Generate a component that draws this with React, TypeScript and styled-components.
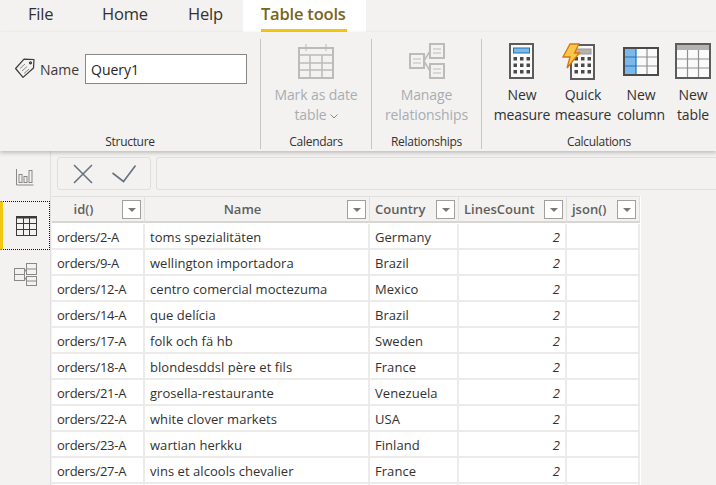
import styled, { createGlobalStyle } from 'styled-components';

const rows = [
  ['orders/2-A', 'toms spezialitäten', 'Germany'],
  ['orders/9-A', 'wellington importadora', 'Brazil'],
  ['orders/12-A', 'centro comercial moctezuma', 'Mexico'],
  ['orders/14-A', 'que delícia', 'Brazil'],
  ['orders/17-A', 'folk och fä hb', 'Sweden'],
  ['orders/18-A', 'blondesddsl père et fils', 'France'],
  ['orders/21-A', 'grosella-restaurante', 'Venezuela'],
  ['orders/22-A', 'white clover markets', 'USA'],
  ['orders/23-A', 'wartian herkku', 'Finland'],
  ['orders/27-A', 'vins et alcools chevalier', 'France'],
];

const columns = ['id()', 'Name', 'Country', 'LinesCount', 'json()'];

const GlobalStyle = createGlobalStyle`
  html, body {
    margin: 0;
    padding: 0;
    height: 485px;
    overflow: hidden;
    background: #f3f2f1;
    font-family: 'Open Sans', 'Noto Sans', sans-serif;
  }
`;

const Page = styled.div`
  width: 716px;
  height: 485px;
  overflow: hidden;
  display: flex;
  flex-direction: column;
  background: #f3f2f1;
  color: #252423;
`;

const TabBar = styled.div`
  height: 32px;
  flex: none;
  display: flex;
  padding-left: 28px;
  font-size: 16.5px;
  letter-spacing: -0.2px;
`;

const Tab = styled.div<{ $width: number }>`
  width: ${(p) => p.$width}px;
  line-height: 27px;
  color: #323130;
`;

const ActiveTab = styled.div`
  width: 123px;
  height: 32px;
  box-sizing: border-box;
  background: #fff;
  padding: 0 19px 0 18px;
`;

const ActiveLabel = styled.div`
  height: 32px;
  box-sizing: border-box;
  border-bottom: 3px solid #f2c811;
  line-height: 27px;
  font-weight: 600;
  color: #7a6420;
  white-space: nowrap;
`;

const Ribbon = styled.div`
  height: 119px;
  flex: none;
  display: flex;
  padding-top: 7px;
  box-sizing: border-box;
  position: relative;
  z-index: 2;
  box-shadow: 0 2px 4px rgba(0, 0, 0, 0.22);
`;

const Group = styled.div<{ $width: number; $last?: boolean }>`
  width: ${(p) => p.$width}px;
  height: 110px;
  flex: none;
  display: flex;
  flex-direction: column;
  box-sizing: border-box;
  border-right: ${(p) => (p.$last ? 'none' : '1px solid #c8c6c4')};
`;

const GroupBody = styled.div<{ $indent?: number }>`
  flex: 1;
  display: flex;
  min-height: 0;
  padding-left: ${(p) => p.$indent ?? 0}px;
`;

const GroupLabel = styled.div`
  height: 15px;
  text-align: center;
  font-size: 12px;
  line-height: 16px;
  letter-spacing: -0.3px;
  color: #323130;
`;

const NameRow = styled.div`
  display: flex;
  align-items: flex-start;
  padding: 15px 0 0 15px;
  font-size: 14px;
`;

const TagSlot = styled.div`
  width: 20px;
  height: 20px;
  margin-top: 4px;
`;

const NameLabel = styled.span`
  width: 40px;
  margin: 0 5px;
  line-height: 32px;
  color: #3b3a39;
`;

const NameInput = styled.div`
  width: 162px;
  height: 30px;
  box-sizing: border-box;
  border: 1px solid #8a8886;
  background: #fff;
  padding-left: 5px;
  line-height: 30px;
  font-size: 14px;
  color: #252423;
`;

const Command = styled.div<{ $width?: number; $disabled?: boolean }>`
  width: ${(p) => (p.$width ? `${p.$width}px` : '100%')};
  flex: none;
  display: flex;
  flex-direction: column;
  align-items: center;
  font-size: 14px;
  letter-spacing: -0.1px;
  line-height: 20px;
  text-align: center;
  white-space: nowrap;
  color: ${(p) => (p.$disabled ? '#a9adb1' : '#323130')};
`;

const IconSlot = styled.div<{ $top?: number; $shift?: number }>`
  height: 39px;
  padding-top: ${(p) => p.$top ?? 4}px;
  box-sizing: content-box;
  margin-bottom: ${(p) => 3 + 4 - (p.$top ?? 4)}px;
  margin-right: ${(p) => p.$shift ?? 0}px;
  display: flex;
  align-items: flex-start;
  justify-content: center;
`;

const Chevron = styled.svg`
  margin-left: 3px;
  vertical-align: 1px;
`;

const Workspace = styled.div`
  flex: 1;
  min-height: 0;
  display: flex;
`;

const SideNav = styled.div`
  width: 51px;
  flex: none;
  box-sizing: border-box;
  border-right: 1px solid #e1dfdd;
  display: flex;
  flex-direction: column;
  padding-top: 1px;
`;

const NavItem = styled.div<{ $active?: boolean }>`
  width: 50px;
  height: 49px;
  flex: none;
  box-sizing: border-box;
  display: flex;
  align-items: center;
  justify-content: center;
  ${(p) =>
    p.$active &&
    `
    border: 1px dotted #111;
    border-left: 3px solid #f2c811;
  `}
`;

const Main = styled.div`
  flex: 1;
  min-width: 0;
  display: flex;
  flex-direction: column;
`;

const FormulaBar = styled.div`
  height: 33px;
  flex: none;
  margin-top: 6px;
  display: flex;
  gap: 5px;
  padding-left: 6px;
`;

const FormulaButtons = styled.div`
  width: 94px;
  box-sizing: border-box;
  border: 1px solid #e1dfdd;
  border-radius: 3px;
  display: flex;
  align-items: center;
  padding-left: 15px;
  gap: 19px;
`;

const FormulaInput = styled.div`
  flex: 1;
  border: 1px solid #e1dfdd;
  border-right: none;
  border-radius: 3px 0 0 3px;
`;

const Grid = styled.div`
  margin: 6px 0 0 1px;
  width: 589px;
  display: grid;
  grid-template-columns: 93px 225px 89px 108px 73px;
  grid-template-rows: 28px;
  grid-auto-rows: 26px;
  background: #fff;
`;

const HeaderCell = styled.div`
  box-sizing: border-box;
  height: 27px;
  position: relative;
  background: #f3f2f1;
  border-top: 1px solid #e1dfdd;
  border-right: 1px solid #e1dfdd;
  border-bottom: 2px solid #d8d6d4;
  font-size: 13px;
  font-weight: 600;
  line-height: 25px;
  color: #605e5c;
`;

const HeaderText = styled.div<{ $centered: boolean }>`
  ${(p) => (p.$centered ? 'padding-right: 29px; text-align: center;' : 'padding-left: 5px;')}
`;

const FilterButton = styled.div`
  position: absolute;
  right: 3px;
  top: 3px;
  width: 19px;
  height: 19px;
  box-sizing: border-box;
  border: 1px solid #a19f9d;
  background: #fff;
  display: flex;
  align-items: center;
  justify-content: center;

  &::after {
    content: '';
    border-left: 4px solid transparent;
    border-right: 4px solid transparent;
    border-top: 4px solid #7a7876;
  }
`;

const Cell = styled.div<{ $numeric?: boolean; $tight?: boolean }>`
  box-sizing: border-box;
  background: #fff;
  border-right: 2px solid #edebe9;
  border-bottom: 2px solid #edebe9;
  padding: 0 5px;
  font-size: 13px;
  letter-spacing: ${(p) => (p.$tight ? '-0.25px' : '0.05px')};
  line-height: 26px;
  white-space: nowrap;
  overflow: hidden;
  color: #323130;
  text-align: ${(p) => (p.$numeric ? 'right' : 'left')};
  font-style: ${(p) => (p.$numeric ? 'italic' : 'normal')};
`;

const TagIcon = () => (
  <svg width="20" height="20" viewBox="0 0 20 20" fill="none" stroke="#3b3a39" strokeWidth="1.2">
    <path d="M0.6 10.5 L9 1.2 L19 1.5 L18.5 10 L8 19.4 Z" strokeLinejoin="round" />
    <circle cx="15.5" cy="4.8" r="1" />
    <path d="M5 10.5l5-4.5M7 13l5-4.5M9 15.5l5-4.5" stroke="#8a8886" strokeWidth="1" />
  </svg>
);

const CalendarIcon = () => (
  <svg width="36" height="36" viewBox="0 0 36 36" fill="none" stroke="#bdbbb9" strokeWidth="2">
    <rect x="1" y="5" width="34" height="30" />
    <path d="M1 12h34M1 20h34M1 27h34M12 12v23M24 12v23" strokeWidth="1.5" />
    <path d="M8 1v7M28 1v7" strokeWidth="1" />
  </svg>
);

const RelationshipIcon = () => (
  <svg width="36" height="36" viewBox="0 0 36 36" fill="none" stroke="#bdbbb9" strokeWidth="2">
    <rect x="1" y="11" width="14" height="14" />
    <rect x="21" y="1" width="14" height="14" />
    <rect x="21" y="21" width="14" height="14" />
    <path d="M15 18 L21 8M15 18 L21 28" strokeWidth="1.5" />
    <path d="M4 16h8M4 20h8M24 6h8M24 10h8M24 26h8M24 30h8" strokeWidth="1.2" />
  </svg>
);

const Keys = ({ x }: { x: number }) => (
  <>
    {[14, 20.5, 27].map((y) =>
      [0, 6.5, 13].map((dx) => (
        <rect key={`${y}-${dx}`} x={x + dx} y={y} width="3.5" height="3.5" fill="#4a4a4a" stroke="none" />
      )),
    )}
  </>
);

const MeasureIcon = () => (
  <svg width="26" height="37" viewBox="0 0 26 37">
    <rect x="1" y="1" width="23" height="34" fill="#fafafa" stroke="#5c5c5c" strokeWidth="2" />
    <rect x="4.5" y="5" width="16" height="5" fill="#7db8ea" stroke="#1f72b8" strokeWidth="1" />
    <Keys x={4.5} />
  </svg>
);

const QuickMeasureIcon = () => (
  <svg width="34" height="39" viewBox="0 0 34 39">
    <rect x="9" y="2" width="23" height="34" fill="#fafafa" stroke="#5c5c5c" strokeWidth="2" />
    <rect x="13" y="6" width="16" height="5" fill="#b5b3b1" stroke="#9a9896" strokeWidth="1" />
    <Keys x={12.5} />
    <path d="M8 1 L17 1 L12.5 10 L17.5 10 L5 25 L8 14 L1 14 Z" fill="#f9c84a" stroke="#d9760c" strokeWidth="1.3" />
  </svg>
);

const ColumnIcon = () => (
  <svg width="36" height="30" viewBox="0 0 36 30">
    <rect x="1" y="1" width="34" height="27" fill="#fafafa" />
    <rect x="1" y="1" width="12" height="27" fill="#7db8ea" />
    <path d="M12.5 10h23M12.5 19h23M24 1v27" stroke="#8f8f8f" strokeWidth="1.2" />
    <path d="M1 10h12M1 19h12M13 1v27" stroke="#1f72b8" strokeWidth="1.2" />
    <rect x="1" y="1" width="34" height="27" fill="none" stroke="#4a4a4a" strokeWidth="2" />
  </svg>
);

const NewTableIcon = () => (
  <svg width="36" height="37" viewBox="0 0 36 37">
    <rect x="1" y="1" width="34" height="34" fill="#fafafa" />
    <rect x="1" y="1" width="34" height="6" fill="#b5b3b1" />
    <path d="M1 16h34M1 25h34M12.5 7v28M23.5 7v28" stroke="#8f8f8f" strokeWidth="1.2" />
    <rect x="1" y="1" width="34" height="34" fill="none" stroke="#5c5c5c" strokeWidth="2" />
  </svg>
);

const ReportIcon = () => (
  <svg width="18" height="18" viewBox="0 0 18 18" fill="none" stroke="#8a8886" strokeWidth="1">
    <path d="M0.5 1v16h17" />
    <rect x="3" y="6.5" width="3" height="8" />
    <rect x="8" y="8.5" width="3" height="6" />
    <rect x="13" y="2.5" width="3" height="12" />
  </svg>
);

const TableNavIcon = () => (
  <svg width="21" height="20" viewBox="0 0 21 20" fill="none" stroke="#3b3a39" strokeWidth="1">
    <rect x="0.5" y="0.5" width="20" height="19" />
    <path d="M0.5 1.5h20" strokeWidth="2" />
    <path d="M0.5 7.5h20M0.5 13.5h20M7.5 2v17M13.5 2v17" />
  </svg>
);

const ModelIcon = () => (
  <svg width="23" height="23" viewBox="0 0 23 23" fill="none" stroke="#8a8886" strokeWidth="1">
    <rect x="0.5" y="5.5" width="10" height="12" />
    <rect x="12.5" y="0.5" width="10" height="11" />
    <rect x="12.5" y="13.5" width="10" height="9" />
    <path d="M0.5 11.5h10M12.5 6h10M12.5 18h10M10.5 9l2-3M10.5 14l2 3" />
  </svg>
);

const CloseIcon = () => (
  <svg width="20" height="20" viewBox="0 0 20 20" fill="none" stroke="#69737f" strokeWidth="1.6">
    <path d="M1 1l18 18M19 1L1 19" />
  </svg>
);

const CheckIcon = () => (
  <svg width="24" height="18" viewBox="0 0 24 18" fill="none" stroke="#69737f" strokeWidth="1.6">
    <path d="M0.5 8l11 8.5L23.5 0.5" />
  </svg>
);

const Row = ({ row }: { row: string[] }) => (
  <>
    {row.map((value, i) => (
      <Cell key={value} $tight={i === 0}>
        {value}
      </Cell>
    ))}
    <Cell $numeric>2</Cell>
    <Cell />
  </>
);

export default function App() {
  return (
    <Page>
      <GlobalStyle />
      <TabBar>
        <Tab $width={74}>File</Tab>
        <Tab $width={86}>Home</Tab>
        <Tab $width={55}>Help</Tab>
        <ActiveTab>
          <ActiveLabel>Table tools</ActiveLabel>
        </ActiveTab>
      </TabBar>

      <Ribbon>
        <Group $width={261}>
          <GroupBody>
            <NameRow>
              <TagSlot>
                <TagIcon />
              </TagSlot>
              <NameLabel>Name</NameLabel>
              <NameInput>Query1</NameInput>
            </NameRow>
          </GroupBody>
          <GroupLabel>Structure</GroupLabel>
        </Group>
        <Group $width={111}>
          <GroupBody>
            <Command $disabled>
              <IconSlot>
                <CalendarIcon />
              </IconSlot>
              <div>Mark as date</div>
              <div>
                table
                <Chevron width="8" height="5" viewBox="0 0 8 5" fill="none" stroke="#8a8886">
                  <path d="M0.5 0.5L4 4l3.5-3.5" />
                </Chevron>
              </div>
            </Command>
          </GroupBody>
          <GroupLabel>Calendars</GroupLabel>
        </Group>
        <Group $width={110}>
          <GroupBody>
            <Command $disabled>
              <IconSlot>
                <RelationshipIcon />
              </IconSlot>
              <div>Manage</div>
              <div>relationships</div>
            </Command>
          </GroupBody>
          <GroupLabel>Relationships</GroupLabel>
        </Group>
        <Group $width={234} $last>
          <GroupBody $indent={10}>
            <Command $width={60}>
              <IconSlot>
                <MeasureIcon />
              </IconSlot>
              <div>New</div>
              <div>measure</div>
            </Command>
            <Command $width={62}>
              <IconSlot $shift={9}>
                <QuickMeasureIcon />
              </IconSlot>
              <div>Quick</div>
              <div>measure</div>
            </Command>
            <Command $width={54}>
              <IconSlot $top={8}>
                <ColumnIcon />
              </IconSlot>
              <div>New</div>
              <div>column</div>
            </Command>
            <Command $width={50}>
              <IconSlot>
                <NewTableIcon />
              </IconSlot>
              <div>New</div>
              <div>table</div>
            </Command>
          </GroupBody>
          <GroupLabel>Calculations</GroupLabel>
        </Group>
      </Ribbon>

      <Workspace>
        <SideNav>
          <NavItem>
            <ReportIcon />
          </NavItem>
          <NavItem $active>
            <TableNavIcon />
          </NavItem>
          <NavItem>
            <ModelIcon />
          </NavItem>
        </SideNav>
        <Main>
          <FormulaBar>
            <FormulaButtons>
              <CloseIcon />
              <CheckIcon />
            </FormulaButtons>
            <FormulaInput />
          </FormulaBar>
          <Grid>
            {columns.map((name, i) => (
              <HeaderCell key={name}>
                <HeaderText $centered={i < 2}>{name}</HeaderText>
                <FilterButton />
              </HeaderCell>
            ))}
            {rows.map((row) => (
              <Row key={row[0]} row={row} />
            ))}
            {columns.map((name) => (
              <Cell key={name} />
            ))}
          </Grid>
        </Main>
      </Workspace>
    </Page>
  );
}
